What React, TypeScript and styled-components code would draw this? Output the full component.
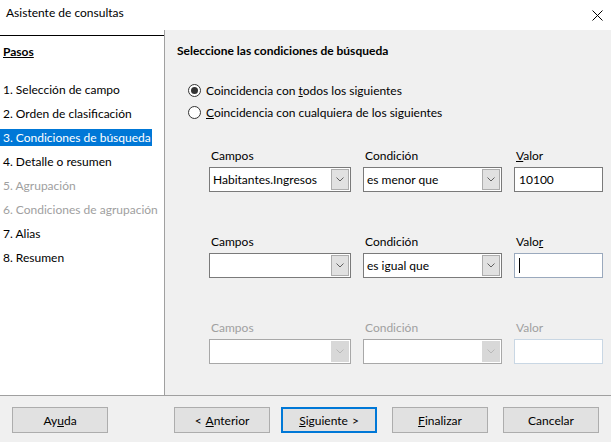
import React from "react";
import styled, { createGlobalStyle, css } from "styled-components";

const Global = createGlobalStyle`
  html, body { margin: 0; padding: 0; background: #fff; }
  body { font-family: Lato, "Noto Sans", "Liberation Sans", sans-serif; font-size: 12px; color: #000; }
  * { box-sizing: border-box; }
`;

const Window = styled.div`
  width: 611px;
  height: 442px;
  display: flex;
  flex-direction: column;
  background: #f0f0f0;
  overflow: hidden;
`;

const TitleBar = styled.div`
  height: 30px;
  flex: none;
  display: flex;
  align-items: center;
  justify-content: space-between;
  background: #fff;
  padding: 0 8px 6px 6px;
  font-size: 12px;
`;

const CloseX = styled.svg`
  width: 11px;
  height: 11px;
  margin-top: 6px;
`;

const Body = styled.div`
  height: 366px;
  flex: none;
  display: flex;
  border-bottom: 1px solid #a0a0a0;
`;

const StepsPanel = styled.div`
  width: 165px;
  flex: none;
  background: #fff;
  border-right: 1px solid #a0a0a0;
  padding-top: 5px;
`;

const StepsHeader = styled.div`
  border-top: 1px solid #000;
  width: 164px;
  padding: 8px 0 0 3px;
  line-height: 16px;
  font-weight: 700;
  text-decoration: underline;
`;

const StepList = styled.div`
  display: flex;
  flex-direction: column;
  align-items: flex-start;
  gap: 7px;
  margin-top: 21px;
`;

const Step = styled.div<{ $active?: boolean; $disabled?: boolean }>`
  line-height: 17px;
  height: 17px;
  padding: 0 1px 0 3px;
  white-space: nowrap;
  color: ${(p) => (p.$disabled ? "#a0a0a0" : p.$active ? "#fff" : "#000")};
  background: ${(p) => (p.$active ? "#0078d7" : "transparent")};
`;

const Main = styled.div`
  flex: 1;
  padding: 13px 0 0 12px;
  display: flex;
  flex-direction: column;
`;

const Heading = styled.div`
  font-weight: 700;
  line-height: 16px;
`;

const RadioGroup = styled.div`
  display: flex;
  flex-direction: column;
  gap: 3px;
  margin: 22px 0 0 11px;
`;

const RadioRow = styled.label`
  display: flex;
  align-items: center;
  gap: 5px;
  line-height: 19px;
  height: 19px;
`;

const RadioCircle = styled.span<{ $checked?: boolean }>`
  width: 13px;
  height: 13px;
  border-radius: 50%;
  border: 1px solid #333;
  background: #fff;
  display: flex;
  align-items: center;
  justify-content: center;
  &::after {
    content: "";
    width: 7px;
    height: 7px;
    border-radius: 50%;
    background: ${(p) => (p.$checked ? "#333" : "transparent")};
  }
`;

const U = styled.span`
  text-decoration: underline;
`;

const ConditionBlock = styled.div<{ $top: number }>`
  display: grid;
  grid-template-columns: 142px 139px 89px;
  column-gap: 12px;
  row-gap: 3px;
  margin-left: 32px;
  margin-top: ${(p) => p.$top}px;
`;

const FieldLabel = styled.div<{ $disabled?: boolean }>`
  line-height: 16px;
  padding-left: 2px;
  color: ${(p) => (p.$disabled ? "#a0a0a0" : "#000")};
`;

const boxBase = css`
  height: 25px;
  background: #fff;
  display: flex;
  align-items: center;
`;

const Combo = styled.div<{ $disabled?: boolean }>`
  ${boxBase};
  border: 1px solid ${(p) => (p.$disabled ? "#a8a8a8" : "#7a7a7a")};
  padding: 0 1px 0 3px;
  justify-content: space-between;
`;

const ComboText = styled.span`
  white-space: nowrap;
`;

const ArrowButton = styled.span<{ $disabled?: boolean }>`
  width: 18px;
  height: 21px;
  background: ${(p) => (p.$disabled ? "#d8d8d8" : "#e1e1e1")};
  border: 1px solid ${(p) => (p.$disabled ? "#d8d8d8" : "#adadad")};
  display: flex;
  align-items: center;
  justify-content: center;
`;

const TextBox = styled.div<{ $tone?: "normal" | "focus" | "disabled" }>`
  ${boxBase};
  border: 1px solid
    ${(p) => (p.$tone === "focus" ? "#9aa9bd" : p.$tone === "disabled" ? "#c9d7e4" : "#7a7a7a")};
  padding-left: 4px;
`;

const Caret = styled.span`
  width: 1px;
  height: 15px;
  background: #000;
`;

const Footer = styled.div`
  flex: 1;
  display: flex;
  align-items: flex-start;
  padding: 11px 0 0 12px;
`;

const Button = styled.div<{ $default?: boolean; $gap: number }>`
  width: 96px;
  height: 26px;
  margin-left: ${(p) => p.$gap}px;
  background: #e1e1e1;
  border: ${(p) => (p.$default ? "2px solid #0078d7" : "1px solid #adadad")};
  display: flex;
  align-items: center;
  justify-content: center;
  white-space: pre;
`;

const Gap = styled.span`
  display: inline-block;
  width: 4px;
`;

function Chevron({ disabled }: { disabled?: boolean }) {
  return (
    <svg width="8" height="5" viewBox="0 0 8 5">
      <path d="M0.5 0.5 L4 4 L7.5 0.5" fill="none" stroke={disabled ? "#b8b8b8" : "#606060"} strokeWidth="1" />
    </svg>
  );
}

type RowProps = {
  top: number;
  field: string;
  cond: string;
  value: React.ReactNode;
  valorLabel: React.ReactNode;
  tone: "normal" | "focus" | "disabled";
};

function ConditionRow({ top, field, cond, value, valorLabel, tone }: RowProps) {
  const dis = tone === "disabled";
  return (
    <ConditionBlock $top={top}>
      <FieldLabel $disabled={dis}>Campos</FieldLabel>
      <FieldLabel $disabled={dis}>Condición</FieldLabel>
      <FieldLabel $disabled={dis}>{valorLabel}</FieldLabel>
      <Combo $disabled={dis}>
        <ComboText>{field}</ComboText>
        <ArrowButton $disabled={dis}>
          <Chevron disabled={dis} />
        </ArrowButton>
      </Combo>
      <Combo $disabled={dis}>
        <ComboText>{cond}</ComboText>
        <ArrowButton $disabled={dis}>
          <Chevron disabled={dis} />
        </ArrowButton>
      </Combo>
      <TextBox $tone={tone}>{value}</TextBox>
    </ConditionBlock>
  );
}

export default function App() {
  return (
    <>
      <Global />
      <Window>
        <TitleBar>
          <span>Asistente de consultas</span>
          <CloseX viewBox="0 0 11 11">
            <path d="M0.5 0.5 L10.5 10.5 M10.5 0.5 L0.5 10.5" stroke="#000" strokeWidth="1" />
          </CloseX>
        </TitleBar>
        <Body>
          <StepsPanel>
            <StepsHeader>Pasos</StepsHeader>
            <StepList>
              <Step>1. Selección de campo</Step>
              <Step>2. Orden de clasificación</Step>
              <Step $active>3. Condiciones de búsqueda</Step>
              <Step>4. Detalle o resumen</Step>
              <Step $disabled>5. Agrupación</Step>
              <Step $disabled>6. Condiciones de agrupación</Step>
              <Step>7. Alias</Step>
              <Step>8. Resumen</Step>
            </StepList>
          </StepsPanel>
          <Main>
            <Heading>Seleccione las condiciones de búsqueda</Heading>
            <RadioGroup>
              <RadioRow>
                <RadioCircle $checked />
                <span>
                  Coincidencia con <U>t</U>odos los siguientes
                </span>
              </RadioRow>
              <RadioRow>
                <RadioCircle />
                <span>
                  <U>C</U>oincidencia con cualquiera de los siguientes
                </span>
              </RadioRow>
            </RadioGroup>
            <ConditionRow
              top={26}
              field="Habitantes.Ingresos"
              cond="es menor que"
              value="10100"
              valorLabel={
                <>
                  <U>V</U>alor
                </>
              }
              tone="normal"
            />
            <ConditionRow
              top={42}
              field=""
              cond="es igual que"
              value={<Caret />}
              valorLabel={
                <>
                  Valo<U>r</U>
                </>
              }
              tone="focus"
            />
            <ConditionRow top={42} field="" cond="" value="" valorLabel="Valor" tone="disabled" />
          </Main>
        </Body>
        <Footer>
          <Button $gap={0}>
            Ay<U>u</U>da
          </Button>
          <Button $gap={66}>
            {"<"}
            <Gap />
            <U>A</U>nterior
          </Button>
          <Button $gap={11} $default>
            <U>S</U>iguiente
            <Gap />
            {">"}
          </Button>
          <Button $gap={15}>
            <U>F</U>inalizar
          </Button>
          <Button $gap={15}>Cancelar</Button>
        </Footer>
      </Window>
    </>
  );
}
